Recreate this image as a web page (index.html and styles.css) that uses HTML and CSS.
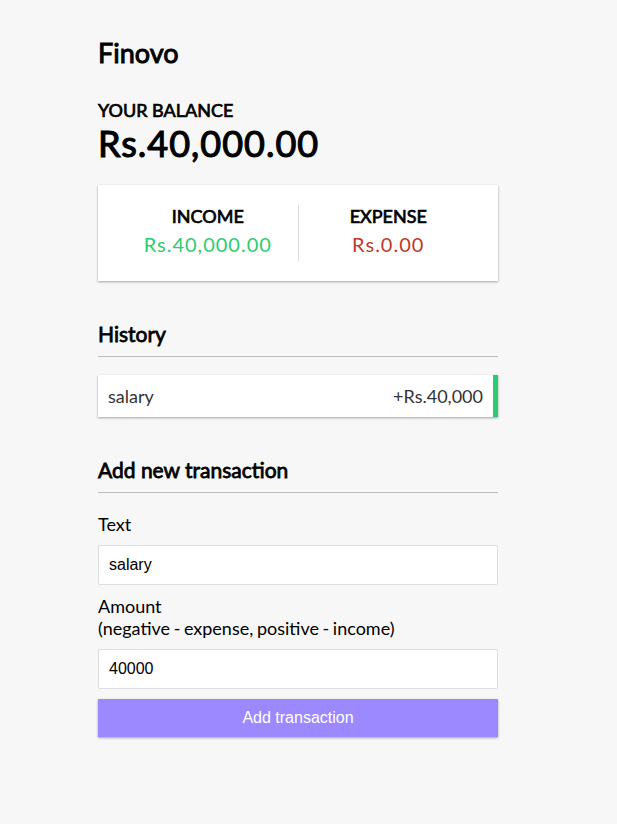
FILE: index.html
```html
<!DOCTYPE html>
<html>
<head>
<meta charset="utf-8">
<title>Finovo</title>
<link rel="stylesheet" href="styles.css">
</head>
<body>
<div class="container">
  <h2 class="brand">Finovo</h2>
  <h4>Your Balance</h4>
  <h1 class="balance">Rs.40,000.00</h1>
  <div class="inc-exp-container">
    <div>
      <h4>Income</h4>
      <p class="money plus">Rs.40,000.00</p>
    </div>
    <div>
      <h4>Expense</h4>
      <p class="money minus">Rs.0.00</p>
    </div>
  </div>
  <h3>History</h3>
  <ul class="list">
    <li class="plus">salary <span>+Rs.40,000</span></li>
  </ul>
  <h3>Add new transaction</h3>
  <form>
    <div class="form-control">
      <label for="text">Text</label>
      <input type="text" id="text" value="salary">
    </div>
    <div class="form-control">
      <label for="amount">Amount <br>(negative - expense, positive - income)</label>
      <input type="number" id="amount" value="40000">
    </div>
    <button class="btn" type="button">Add transaction</button>
  </form>
</div>
</body>
</html>
```
FILE: styles.css
```css
* {
  box-sizing: border-box;
}

body {
  background-color: #f7f7f7;
  margin: 0;
  font-family: Lato, "Open Sans", sans-serif;
  font-size: 18px;
}

.container {
  width: 400px;
  margin: 0 0 0 98px;
  padding-top: 36px;
}

h1, h2, h3, h4 {
  font-weight: 400;
}

.brand {
  font-size: 27px;
  margin: 0 0 30px;
  -webkit-text-stroke: 0.94px currentColor;
}

h1 {
  font-size: 36px;
  margin: 0;
  letter-spacing: 1px;
  -webkit-text-stroke: 1.12px currentColor;
}

h3 {
  font-size: 21px;
  border-bottom: 1px solid #bbb;
  padding-bottom: 10px;
  margin: 40px 0 10px;
  -webkit-text-stroke: 0.78px currentColor;
}

h4 {
  font-size: 18px;
  margin: 0;
  text-transform: uppercase;
  -webkit-text-stroke: 0.69px currentColor;
}

.inc-exp-container {
  background-color: #fff;
  box-shadow: 0 1px 3px rgba(0, 0, 0, 0.12), 0 1px 2px rgba(0, 0, 0, 0.24);
  padding: 20px;
  display: flex;
  justify-content: space-between;
  margin: 20px 0;
}

.inc-exp-container > div {
  flex: 1;
  text-align: center;
}

.inc-exp-container > div:first-of-type {
  border-right: 1px solid #dedede;
}

.money {
  font-size: 20px;
  letter-spacing: 1px;
  margin: 5px 0;
}

.money.plus {
  color: #2ecc71;
}

.money.minus {
  color: #c0392b;
}

.list {
  list-style-type: none;
  padding: 0;
  margin: 18px 0 40px;
}

.list li {
  background-color: #fff;
  box-shadow: 0 1px 3px rgba(0, 0, 0, 0.12), 0 1px 2px rgba(0, 0, 0, 0.24);
  color: #333;
  display: flex;
  justify-content: space-between;
  padding: 10px;
  margin: 10px 0;
}

.list li.plus {
  border-right: 5px solid #2ecc71;
}

form {
  margin: 0;
}

label {
  display: inline-block;
  margin: 10px 0;
  word-spacing: -1px;
}

input {
  border: 1px solid #dedede;
  border-radius: 2px;
  display: block;
  font-family: "Liberation Sans", Arial, sans-serif;
  font-size: 16px;
  padding: 10px;
  width: 100%;
  background: #fff;
  color: #000;
}

.btn {
  background-color: #9c88ff;
  box-shadow: 0 1px 3px rgba(0, 0, 0, 0.12), 0 1px 2px rgba(0, 0, 0, 0.24);
  color: #fff;
  border: 0;
  display: block;
  font-family: "Liberation Sans", Arial, sans-serif;
  font-size: 16px;
  margin: 10px 0 30px;
  padding: 10px;
  width: 100%;
}
```
